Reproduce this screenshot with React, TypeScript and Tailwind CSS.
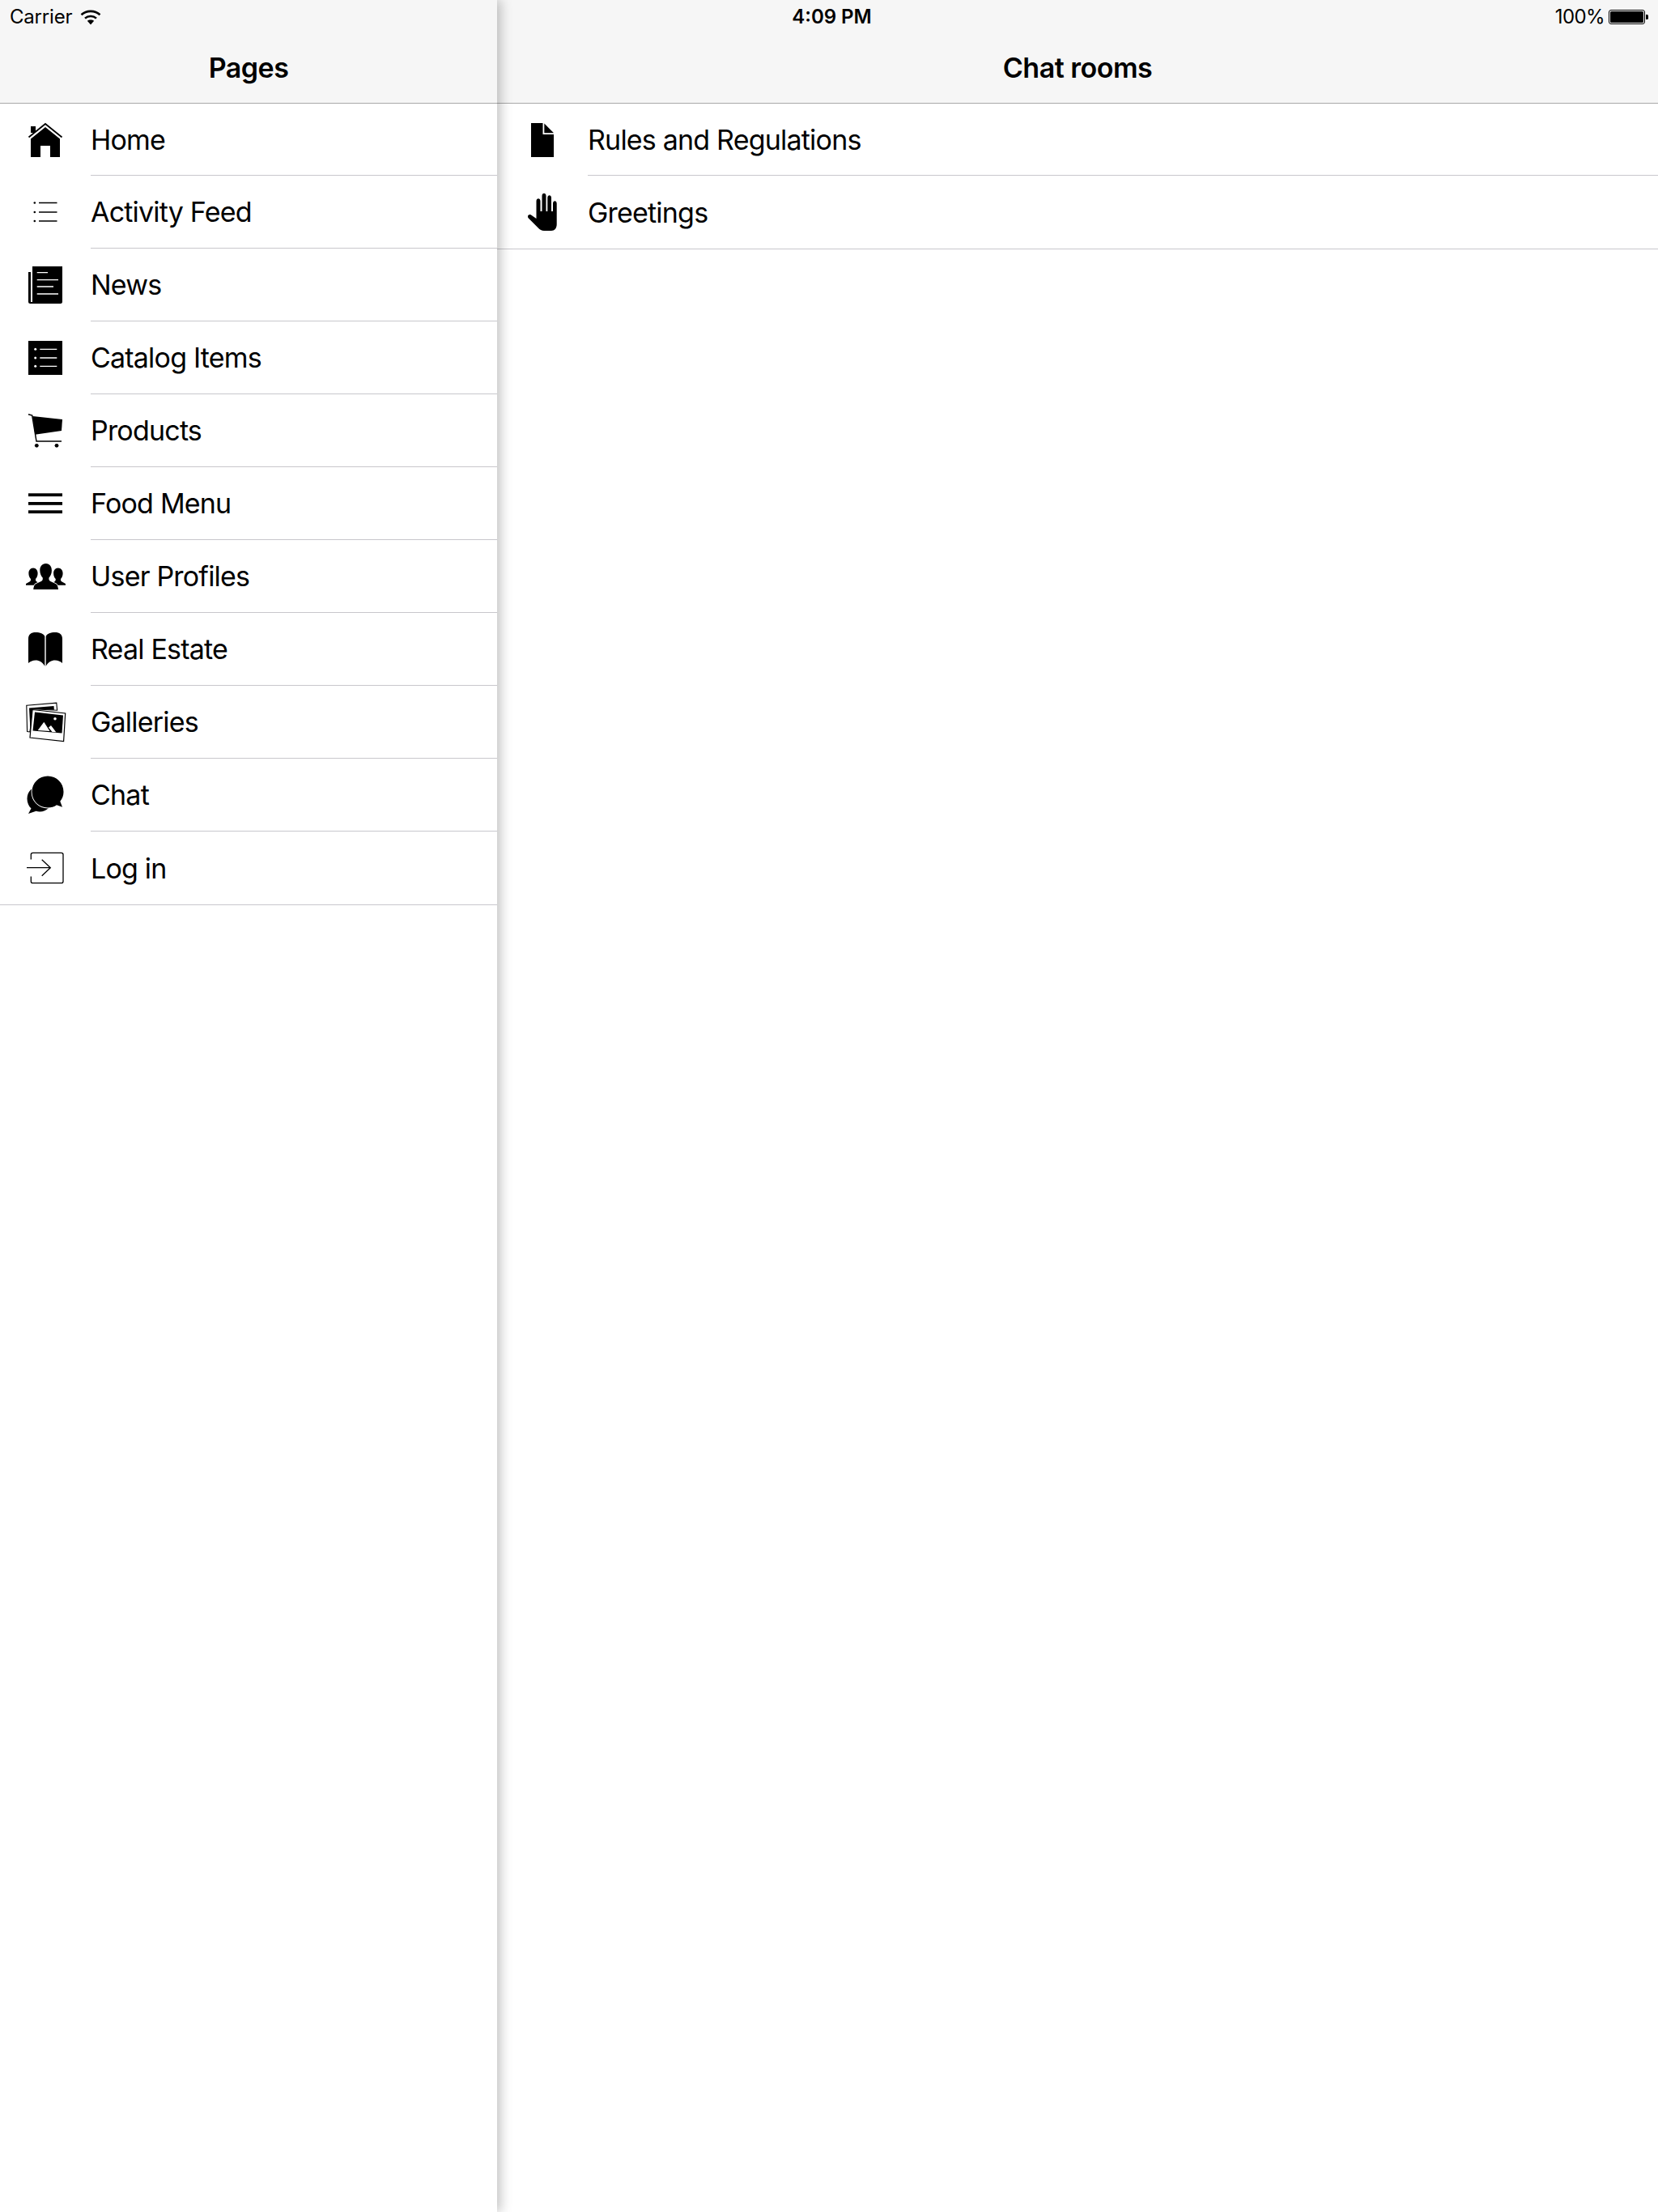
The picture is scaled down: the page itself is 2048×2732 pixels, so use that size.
import React from 'react';

// every icon is drawn in a 56x56 box centred on its row
function Icon({ children }: { children: React.ReactNode }) {
  return (
    <svg viewBox="0 0 56 56" className="w-14 h-14 shrink-0">
      {children}
    </svg>
  );
}

const HomeIcon = () => (
  <Icon>
    <rect x="10" y="11" width="6" height="8" />
    <path d="M7.5 24.5 28 8l20.5 16.5" fill="none" stroke="#000" strokeWidth="1.8" />
    <path d="M10 26.5 28 12l18 14.5V49H34V35H22v14H10z" />
  </Icon>
);

const FeedIcon = () => (
  <Icon>
    <path d="M20 16.5h22.500M20 28h22.500M20 39h22.500" stroke="#000" strokeWidth="1.400" />
    <circle cx="14.800" cy="16.500" r="1.300" />
    <circle cx="14.800" cy="28" r="1.300" />
    <circle cx="14.800" cy="39" r="1.300" />
  </Icon>
);

const NewsIcon = () => (
  <Icon>
    <path d="M12 5h37v43.500a2.500 2.500 0 0 1-2.500 2.500H9.500A2.500 2.500 0 0 1 7 48.500V12h3v37h2z" />
    <path d="M17.700 12.700H31M17.700 21.700H44M17.700 30H38M17.700 39H44" stroke="#fff" strokeWidth="1.300" />
  </Icon>
);

const CatalogIcon = () => (
  <Icon>
    <rect x="7" y="7" width="42" height="42" />
    <path d="M21.300 17.300h21M21.300 28h21M21.300 38.300h21" stroke="#fff" strokeWidth="1.300" />
    <circle cx="15.700" cy="17.300" r="1.500" fill="#fff" />
    <circle cx="15.700" cy="28" r="1.500" fill="#fff" />
    <circle cx="15.700" cy="38.300" r="1.500" fill="#fff" />
  </Icon>
);

const CartIcon = () => (
  <Icon>
    <path d="M7 7.700 11.700 9 17 41h31" fill="none" stroke="#000" strokeWidth="1.500" />
    <path d="M12.300 10 49 14l-1 14-32.700 4.700z" />
    <circle cx="17.300" cy="46.300" r="2.400" />
    <circle cx="42" cy="46.300" r="2.400" />
  </Icon>
);

const MenuIcon = () => (
  <Icon>
    <rect x="7" y="15.300" width="42" height="3.800" />
    <rect x="7" y="26" width="42" height="3.800" />
    <rect x="7" y="36.300" width="42" height="3.800" />
  </Icon>
);

const ProfilesIcon = () => (
  <Icon>
    <path d="M13 17.500c-3.600 0-5.600 3-5.600 6.600 0 3 1 5.400 2.600 7 .3 1.600-.2 2.800-1.600 3.500L4 37v1.800h18V37l-4.400-2.400c-1.400-.7-1.900-1.900-1.600-3.500 1.600-1.600 2.600-4 2.600-7 0-3.600-2-6.600-5.600-6.600z" />
    <path d="M43.700 17.500c-3.600 0-5.600 3-5.600 6.600 0 3 1 5.400 2.600 7 .3 1.600-.2 2.800-1.600 3.500L34.700 37v1.800H53V37l-4.400-2.400c-1.400-.7-1.900-1.900-1.600-3.500 1.600-1.600 2.600-4 2.600-7 0-3.600-2-6.600-5.900-6.600z" />
    <path
      d="M28.700 12c-4.800 0-7.400 3.600-7.400 8.400 0 3.700 1.300 6.900 3.400 9 .4 2.200-.2 3.700-1.900 4.500l-6.800 3.300c-1.600.8-2.300 3.200-2.800 6.800h30.800c-.5-3.600-1.200-6-2.800-6.800l-6.800-3.300c-1.700-.8-2.300-2.300-1.900-4.500 2.100-2.100 3.400-5.300 3.400-9 0-4.800-2.600-8.400-7.200-8.400z"
      stroke="#fff"
      strokeWidth="1.600"
      paintOrder="stroke"
    />
  </Icon>
);

const BookIcon = () => (
  <Icon>
    <path d="M7 15C7 9.500 10.500 7 16 7c5.500 0 10 1.500 11.300 5v36.700C24.500 44 20.500 41.500 16 41.500c-3.500 0-6.500 1.500-9 3.500z" />
    <path d="M49 15c0-5.500-3.500-8-9-8-5.500 0-10 1.500-11.300 5v36.700C31.500 44 35.500 41.500 40 41.500c3.500 0 6.500 1.500 9 3.500z" />
  </Icon>
);

const GalleryIcon = () => (
  <Icon>
    <path d="M4.800 7.300 41.800 4.200l.8 9-30-1.500-3.700 28.300-3.300-.4z" fill="#fff" stroke="#000" strokeWidth="1.100" />
    <path d="M8 10.500 38.500 8l.4 4.800-26.500-1.300-3 24.500z" />
    <path d="M12 12.500 52.700 17 50.600 51.500 9 47z" fill="#fff" stroke="#000" strokeWidth="1.200" />
    <path d="M15 15.500 50 19.500 48.500 41.500 12.500 38.500z" />
    <path d="M26.300 27.700 18.700 38 33.500 39z" fill="#fff" />
    <path d="M35 32 41.300 40.300 36.500 40 32 34.500z" fill="#fff" />
    <circle cx="40" cy="23.700" r="1.800" fill="#fff" />
  </Icon>
);

const ChatIcon = () => (
  <Icon>
    <path d="M21 17c-9 0-15.500 6.500-15.500 15.500 0 5 2 9.300 5 12L7 51l9.500-3.300c1.500.5 3 .7 4.500.7 9 0 15.500-7 15.500-16S30 17 21 17z" />
    <path
      d="M31 4.500C20 4.500 11.500 13 11.500 24S20 43.500 31 43.500c4.300 0 8-1.200 11-3.300l7 2.500-2.700-7c2.800-3.300 4.200-7.400 4.200-11.700C50.500 13 42 4.500 31 4.500z"
      stroke="#fff"
      strokeWidth="1.800"
      paintOrder="stroke"
    />
  </Icon>
);

const LoginIcon = () => (
  <Icon>
    <path
      d="M10.300 17.500v-6a2.200 2.200 0 0 1 2.200-2.200h35.300a2.200 2.200 0 0 1 2.200 2.200v33a2.200 2.200 0 0 1-2.200 2.200H12.500a2.200 2.200 0 0 1-2.200-2.200v-6"
      fill="none"
      stroke="#000"
      strokeWidth="1.300"
    />
    <path d="M5 27.700h29.300M23.700 17.700l10.600 10-10.600 10" fill="none" stroke="#000" strokeWidth="1.300" />
  </Icon>
);

const DocIcon = () => (
  <Icon>
    <path d="M14 7h14.500v14H42v28H14z" />
    <path d="M30.300 7.500 42 19.300H30.300z" />
  </Icon>
);

const HandIcon = () => (
  <Icon>
    <path d="M20.500 14.500c0-4.200 5-4.200 5 0V27h2V8c0-4.200 5-4.200 5 0v19h1.800V10.500c0-4.200 4.700-4.200 4.700 0V27h2V17.500c0-4.200 4.700-4.200 4.700 0V43c0 5-2.700 8-6.700 8H30c-3 0-5.200-1.200-7.200-3.500L10.800 35.500c-2.300-2.600 .4-5.700 3.200-4l6.500 4.500z" />
  </Icon>
);

const WifiIcon = () => (
  <svg viewBox="0 0 26 20" className="w-[26px] h-5 shrink-0">
    <path d="M1.500 7.200C7.800 1.400 18.200 1.400 24.500 7.200" fill="none" stroke="#000" strokeWidth="2.600" />
    <path d="M6 11.600c3.900-3.500 10.100-3.500 14 0" fill="none" stroke="#000" strokeWidth="2.600" />
    <path d="M8.800 14.800c2.300-1.900 6.100-1.900 8.400 0L13 19.500z" />
  </svg>
);

const BatteryIcon = () => (
  <svg viewBox="0 0 49 18" className="w-[49px] h-[18px] shrink-0">
    <rect x="0.500" y="0.500" width="44" height="17" rx="2.500" fill="none" stroke="#000" />
    <rect x="2" y="2" width="41" height="14" rx="1.500" />
    <path d="M46 6h1.500a1.500 1.500 0 0 1 1.500 1.500v3a1.500 1.500 0 0 1-1.500 1.500H46z" />
  </svg>
);

interface Row {
  label: string;
  icon: React.ComponentType;
}

const pages: Row[] = [
  { label: 'Home', icon: HomeIcon },
  { label: 'Activity Feed', icon: FeedIcon },
  { label: 'News', icon: NewsIcon },
  { label: 'Catalog Items', icon: CatalogIcon },
  { label: 'Products', icon: CartIcon },
  { label: 'Food Menu', icon: MenuIcon },
  { label: 'User Profiles', icon: ProfilesIcon },
  { label: 'Real Estate', icon: BookIcon },
  { label: 'Galleries', icon: GalleryIcon },
  { label: 'Chat', icon: ChatIcon },
  { label: 'Log in', icon: LoginIcon },
];

const rooms: Row[] = [
  { label: 'Rules and Regulations', icon: DocIcon },
  { label: 'Greetings', icon: HandIcon },
];

function List({ rows }: { rows: Row[] }) {
  return (
    <ul>
      {rows.map((row, i) => {
        const isLast = i === rows.length - 1;
        return (
          <li
            key={row.label}
            className={`flex ${i === 0 ? 'h-[89px]' : isLast ? 'h-[91px]' : 'h-[90px]'} ${
              isLast ? 'border-b border-[#c8c7cc]' : ''
            }`}
          >
            <div className="w-[112px] flex items-center justify-center shrink-0">
              <row.icon />
            </div>
            <div
              className={`flex-1 flex items-center text-[34px] font-[380] tracking-[-0.8px] text-black ${
                isLast ? '' : 'border-b border-[#c8c7cc]'
              }`}
            >
              {row.label}
            </div>
          </li>
        );
      })}
    </ul>
  );
}

function NavBar({ title }: { title: string }) {
  return (
    <div className="h-[128px] pt-10 bg-[#f6f6f6] border-b border-[#a8a8a8] flex items-center justify-center">
      <span className="text-[34px] font-semibold tracking-[-0.5px] text-black">{title}</span>
    </div>
  );
}

export default function App() {
  return (
    <div className="relative flex w-[2048px] h-[2732px] overflow-hidden bg-white font-['Inter',sans-serif]">
      <aside className="relative z-10 w-[614px] shrink-0 bg-white shadow-[4px_0_14px_rgba(0,0,0,0.25)]">
        <NavBar title="Pages" />
        <List rows={pages} />
      </aside>
      <main className="flex-1">
        <NavBar title="Chat rooms" />
        <List rows={rooms} />
      </main>
      {/* status bar sits over both nav bars */}
      <div className="absolute z-20 top-0 left-0 right-0 h-[42px] grid grid-cols-3 items-center px-3 text-[24px] text-black">
        <div className="flex items-center gap-[10px] tracking-[-0.2px]">
          <span>Carrier</span>
          <WifiIcon />
        </div>
        <div className="text-center font-semibold pl-[7px]">4:09 PM</div>
        <div className="flex items-center justify-end gap-[5px]">
          <span className="tracking-[-0.6px]">100%</span>
          <BatteryIcon />
        </div>
      </div>
    </div>
  );
}
